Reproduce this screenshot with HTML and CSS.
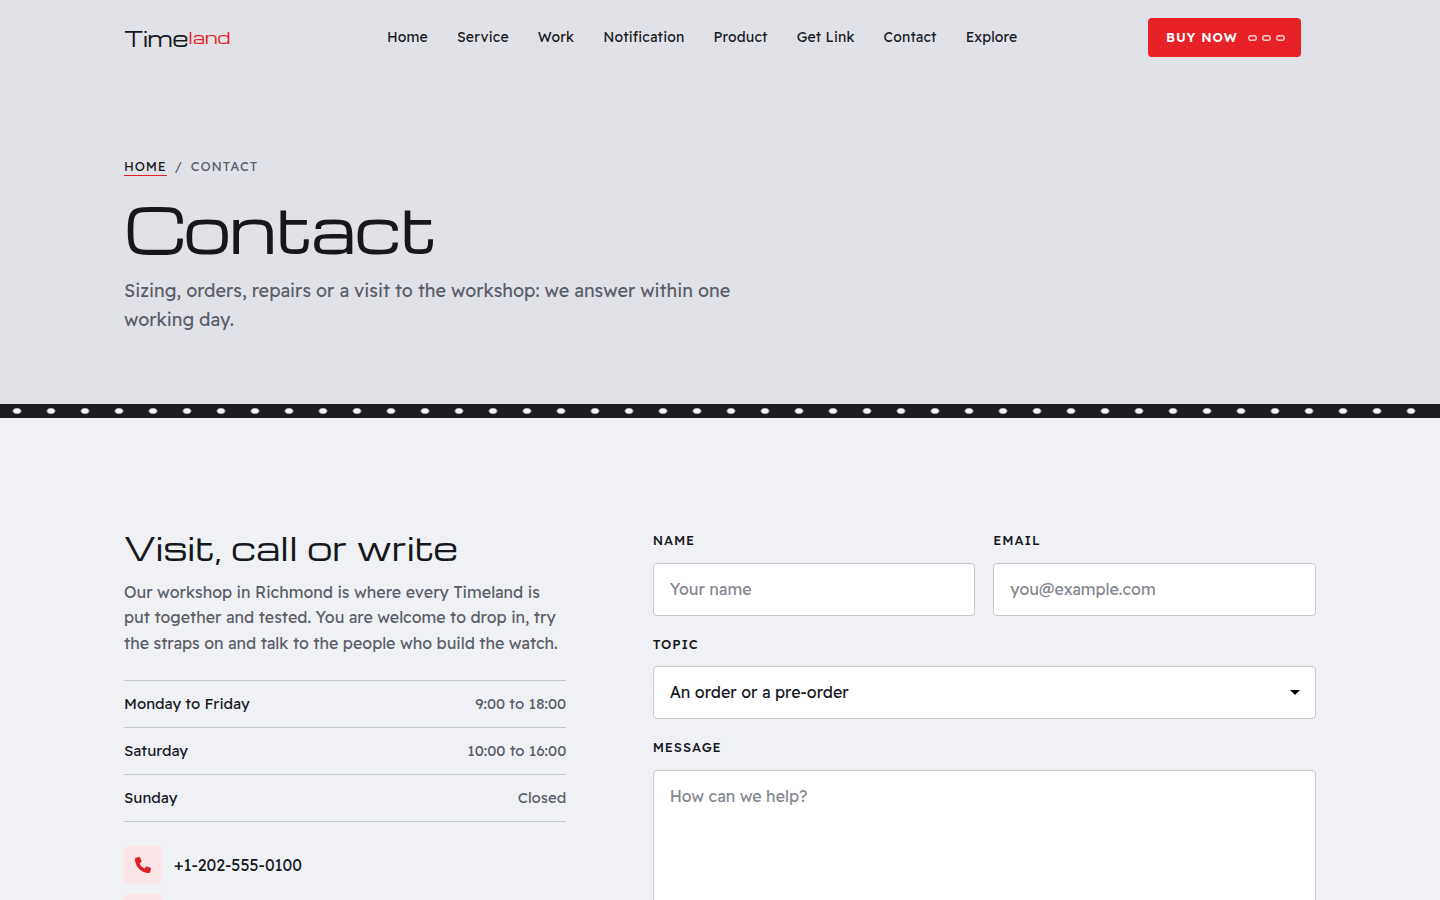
FILE: index.html
```html
<!DOCTYPE html>
<html lang="en">
<head>
  <meta charset="UTF-8" />
  <meta name="viewport" content="width=device-width, initial-scale=1.0"/>
  <title>Timeland - Contact</title>
  <link rel="stylesheet" href="styles.css">
</head>
<body>

<header class="header">
  <a class="logo" href="#"><span class="logo-time">Time</span><span class="logo-land">land</span></a>
  <nav class="nav">
    <a href="#">Home</a>
    <a href="#">Service</a>
    <a href="#">Work</a>
    <a href="#">Notification</a>
    <a href="#">Product</a>
    <a href="#">Get Link</a>
    <a href="#">Contact</a>
    <a href="#">Explore</a>
  </nav>
  <a class="buy" href="#"><span class="buy-text">Buy now</span>
    <svg class="links" width="37" height="6" viewBox="0 0 37 6">
      <rect x="0.7" y="0.7" width="7.6" height="4.6" rx="2.2"/>
      <rect x="14.7" y="0.7" width="7.6" height="4.6" rx="2.2"/>
      <rect x="28.7" y="0.7" width="7.6" height="4.6" rx="2.2"/>
    </svg>
  </a>
</header>

<section class="hero">
  <div class="breadcrumb">
    <a href="#">Home</a>
    <span class="slash">/</span>
    <span class="current">Contact</span>
  </div>
  <h1>Contact</h1>
  <p class="lead">Sizing, orders, repairs or a visit to the workshop: we answer within one <br>working day.</p>
</section>

<div class="strap"></div>

<main class="content">
  <div class="info">
    <h2>Visit, call or write</h2>
    <p class="about">Our workshop in Richmond is where every Timeland is <br>put together and tested. You are welcome to drop in, try <br>the straps on and talk to the people who build the watch.</p>
    <ul class="hours">
      <li><span class="day">Monday to Friday</span><span class="time">9:00 to 18:00</span></li>
      <li><span class="day">Saturday</span><span class="time">10:00 to 16:00</span></li>
      <li><span class="day">Sunday</span><span class="time">Closed</span></li>
    </ul>
    <div class="reach">
      <a class="reach-item" href="#">
        <span class="reach-icon">
          <svg width="16" height="16" viewBox="0 0 512 512"><path fill="currentColor" d="M164.900 24.600c-7.700-18.600-28-28.500-47.400-23.200l-88 24C12.100 30.200 0 46 0 64c0 247.400 200.600 448 448 448 18 0 33.800-12.100 38.600-29.500l24-88c5.300-19.400-4.600-39.700-23.200-47.400l-96-40c-16.300-6.800-35.200-2.100-46.300 11.600L304.700 368C234.300 334.700 177.300 277.700 144 207.300L193.300 167c13.700-11.200 18.400-30 11.600-46.300l-40-96z"/></svg>
        </span>
        <span class="phone">+1-202-555-0100</span>
      </a>
      <a class="reach-item" href="#">
        <span class="reach-icon"></span>
      </a>
    </div>
  </div>

  <form class="form">
    <div class="row">
      <div class="field">
        <label for="name">Name</label>
        <input type="text" id="name" placeholder="Your name">
      </div>
      <div class="field">
        <label for="email">Email</label>
        <input type="email" id="email" placeholder="you@example.com">
      </div>
    </div>
    <div class="field">
      <label for="topic">Topic</label>
      <div class="select">
        <select id="topic">
          <option>An order or a pre-order</option>
        </select>
        <svg class="caret" width="10" height="5" viewBox="0 0 10 5"><path d="M0 0h10L5 5z"/></svg>
      </div>
    </div>
    <div class="field">
      <label for="message">Message</label>
      <textarea id="message" placeholder="How can we help?"></textarea>
    </div>
  </form>
</main>

</body>
</html>
```
FILE: styles.css
```css
* {
  box-sizing: border-box;
}

body {
  margin: 0;
  height: 100vh;
  overflow: hidden;
  background: #eff1f5;
  color: #16171d;
  font-family: "Readex Pro", Lexend, Inter, sans-serif;
  font-size: 16px;
  line-height: 1.6;
}

a {
  color: inherit;
  text-decoration: none;
}

h1, h2, p, ul {
  margin: 0;
  padding: 0;
  font-weight: 400;
}

.header {
  display: flex;
  align-items: center;
  height: 75px;
  padding: 0 139px 0 124px;
  background: #e1e2e8;
}

.logo {
  display: flex;
  width: 263px;
  height: 32px;
  font-family: Michroma, "DejaVu Sans", sans-serif;
}

.logo-time {
  font-size: 20.8px;
  line-height: 32px;
  letter-spacing: -0.2px;
}

.logo-land {
  color: #e41f28;
  font-size: 16px;
  line-height: 29px;
}

.nav {
  display: flex;
  gap: 29px;
  font-size: 14px;
  letter-spacing: 0.01em;
  white-space: nowrap;
}

.buy {
  display: flex;
  align-items: center;
  justify-content: space-between;
  width: 153px;
  height: 39px;
  margin-left: auto;
  padding: 0 16px 0 18px;
  border-radius: 4px;
  background: #e82127;
  color: #fff;
  font-size: 13px;
  font-weight: 600;
  letter-spacing: 0.9px;
  text-transform: uppercase;
}

.links {
  margin-top: 1px;
  fill: none;
  stroke: #fbd0d2;
  stroke-width: 1.4;
}

.hero {
  height: 329px;
  padding: 82px 124px 0;
  background: #e1e2e8;
}

.breadcrumb {
  display: flex;
  height: 20px;
  gap: 8px;
  color: #5a5d68;
  font-size: 13px;
  line-height: 19px;
  letter-spacing: 0.85px;
  text-transform: uppercase;
}

.breadcrumb a {
  height: 19px;
  border-bottom: 1px solid #e41f28;
  color: #16171d;
}

h1 {
  height: 70px;
  margin-top: 16px;
  font-family: Michroma, "DejaVu Sans", sans-serif;
  font-size: 60px;
  line-height: 70px;
  letter-spacing: -0.02em;
}

.lead {
  margin-top: 14px;
  color: #5a5d68;
  font-size: 18px;
}

/* watch strap with punched holes */
.strap {
  height: 14px;
  background: radial-gradient(ellipse 5px 3.5px at 17px 7px, #f3f4f8 60%, #1b1b20 100%) 0 0 / 34px 14px;
}

.content {
  display: grid;
  grid-template-columns: 1fr 1.5fr;
  gap: 86.4px;
  padding: 112px 124px 0;
}

h2 {
  height: 40px;
  font-family: Michroma, "DejaVu Sans", sans-serif;
  font-size: 32px;
  line-height: 34px;
}

.about {
  margin-top: 9.6px;
  color: #5a5d68;
  white-space: nowrap;
}

.hours {
  margin-top: 23.4px;
  border-top: 1px solid #c6c8d0;
  list-style: none;
  font-size: 15px;
}

.hours li {
  display: flex;
  align-items: center;
  justify-content: space-between;
  height: 47px;
  border-bottom: 1px solid #c6c8d0;
}

.time {
  color: #5a5d68;
}

.reach {
  display: flex;
  flex-direction: column;
  gap: 10px;
  margin-top: 24px;
}

.reach-item {
  display: flex;
  align-items: center;
  gap: 12px;
}

.reach-icon {
  display: flex;
  align-items: center;
  justify-content: center;
  width: 38px;
  height: 38px;
  border-radius: 4px;
  background: #fce5e6;
  color: #dc2029;
}

.phone {
  padding-top: 2px;
}

.form {
  display: flex;
  flex-direction: column;
  gap: 18px;
  padding-top: 0.4px;
}

.row {
  display: grid;
  grid-template-columns: 1fr 1fr;
  gap: 18px;
}

.field {
  display: flex;
  flex-direction: column;
}

label {
  margin-bottom: 11.6px;
  font-size: 13px;
  font-weight: 500;
  line-height: 20.8px;
  letter-spacing: 0.9px;
  text-transform: uppercase;
}

input, select, textarea {
  display: block;
  width: 100%;
  height: 53px;
  padding: 0 16px;
  border: 1px solid #c6c8d0;
  border-radius: 4px;
  background: #fff;
  color: #16171d;
  font: inherit;
  appearance: none;
}

textarea {
  height: 190px;
  padding-top: 13.6px;
  resize: none;
}

::placeholder {
  color: #85868f;
}

.select {
  position: relative;
}

.caret {
  position: absolute;
  right: 16px;
  top: 24px;
}
```
